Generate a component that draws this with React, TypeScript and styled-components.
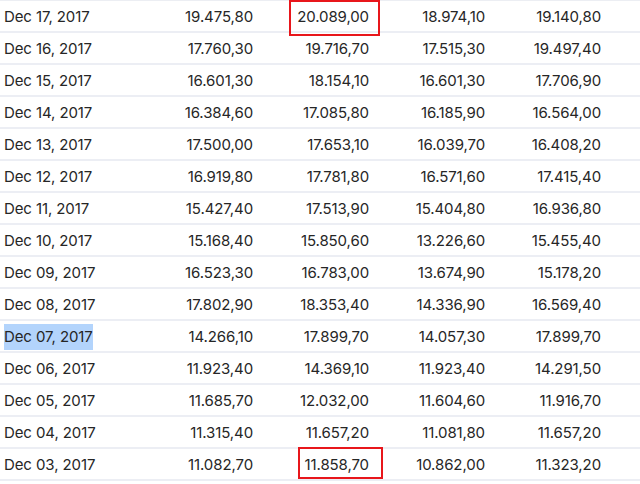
import React from "react";
import styled, { createGlobalStyle } from "styled-components";

const Global = createGlobalStyle`
  html, body { margin: 0; padding: 0; background: #ffffff; }
  body { font-family: Inter, "Noto Sans", sans-serif; color: #262626; overflow: hidden; }
`;

const Table = styled.div`
  width: 640px;
  border-top: 1px solid #eceef3;
`;

const Row = styled.div`
  display: grid;
  grid-template-columns: 137px repeat(4, 116px) 1fr;
  height: 30px;
  line-height: 32px;
  border-bottom: 2px solid #eceef4;
  align-items: stretch;
  font-size: 15px;
  letter-spacing: -0.1px;
`;

const DateCell = styled.div`
  padding-left: 4px;
  white-space: nowrap;
`;

const Selected = styled.span<{ $sel?: boolean }>`
  background: ${(p) => (p.$sel ? "#b3d4fc" : "transparent")};
  padding: 3px 0 4px;
`;

const NumCell = styled.div`
  position: relative;
  text-align: right;
  white-space: nowrap;
`;

const Mark = styled.span<{ $left: number; $right: number; $top: number; $bottom: number }>`
  position: absolute;
  left: ${(p) => p.$left}px;
  right: ${(p) => p.$right}px;
  top: ${(p) => p.$top}px;
  bottom: ${(p) => p.$bottom}px;
  border: 2px solid #e8161b;
  pointer-events: none;
`;

type R = { d: string; v: [string, string, string, string]; mark?: "top" | "bottom"; sel?: boolean };

const rows: R[] = [
  { d: "Dec 17, 2017", v: ["19.475,80", "20.089,00", "18.974,10", "19.140,80"], mark: "top" },
  { d: "Dec 16, 2017", v: ["17.760,30", "19.716,70", "17.515,30", "19.497,40"] },
  { d: "Dec 15, 2017", v: ["16.601,30", "18.154,10", "16.601,30", "17.706,90"] },
  { d: "Dec 14, 2017", v: ["16.384,60", "17.085,80", "16.185,90", "16.564,00"] },
  { d: "Dec 13, 2017", v: ["17.500,00", "17.653,10", "16.039,70", "16.408,20"] },
  { d: "Dec 12, 2017", v: ["16.919,80", "17.781,80", "16.571,60", "17.415,40"] },
  { d: "Dec 11, 2017", v: ["15.427,40", "17.513,90", "15.404,80", "16.936,80"] },
  { d: "Dec 10, 2017", v: ["15.168,40", "15.850,60", "13.226,60", "15.455,40"] },
  { d: "Dec 09, 2017", v: ["16.523,30", "16.783,00", "13.674,90", "15.178,20"] },
  { d: "Dec 08, 2017", v: ["17.802,90", "18.353,40", "14.336,90", "16.569,40"] },
  { d: "Dec 07, 2017", v: ["14.266,10", "17.899,70", "14.057,30", "17.899,70"], sel: true },
  { d: "Dec 06, 2017", v: ["11.923,40", "14.369,10", "11.923,40", "14.291,50"] },
  { d: "Dec 05, 2017", v: ["11.685,70", "12.032,00", "11.604,60", "11.916,70"] },
  { d: "Dec 04, 2017", v: ["11.315,40", "11.657,20", "11.081,80", "11.657,20"] },
  { d: "Dec 03, 2017", v: ["11.082,70", "11.858,70", "10.862,00", "11.323,20"], mark: "bottom" },
];

export default function App() {
  return (
    <>
      <Global />
      <Table>
        {rows.map((r) => (
          <Row key={r.d}>
            <DateCell>
              <Selected $sel={r.sel}>{r.d}</Selected>
            </DateCell>
            {r.v.map((x, i) => (
              <NumCell key={i}>
                {x}
                {i === 1 && r.mark === "top" && <Mark $left={36} $right={-11} $top={-1} $bottom={-3} />}
                {i === 1 && r.mark === "bottom" && <Mark $left={45} $right={-14} $top={-2} $bottom={2} />}
              </NumCell>
            ))}
            <div />
          </Row>
        ))}
      </Table>
    </>
  );
}
